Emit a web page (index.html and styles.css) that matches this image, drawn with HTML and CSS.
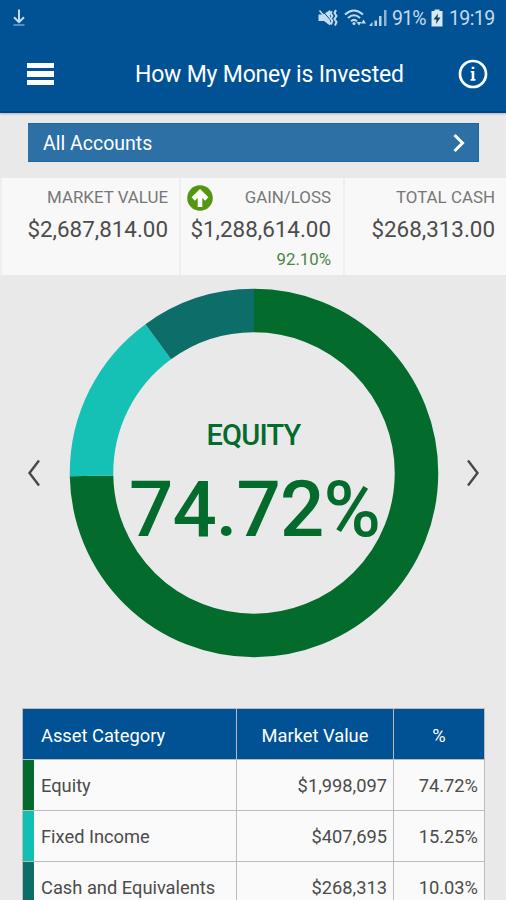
FILE: index.html
```html
<!DOCTYPE html>
<html lang="en">
<head>
  <meta charset="UTF-8" />
  <meta name="viewport" content="width=device-width, initial-scale=1.0" />
  <title>How My Money is Invested</title>
  <link rel="stylesheet" href="styles.css">
</head>
<body>
  <header class="app-header">
    <!-- status bar -->
    <div class="status-bar">
      <svg class="download" width="14" height="18" viewBox="0 0 14 18">
        <path d="M7 0.500V13M2 8.200L7 13.200L12 8.200" fill="none" stroke="#c5dbee" stroke-width="2" />
        <path d="M1.500 16H12.500" stroke="#6f9fc8" stroke-width="1.600" />
      </svg>
      <div class="status-icons">
        <svg class="mute" width="20" height="18" viewBox="0 0 20 18">
          <path d="M0.500 5.500H5L12 1V16.500L6 12H0.500Z" fill="#c5dbee" />
          <path d="M4.500 2L12.500 11" stroke="#005295" stroke-width="1" />
          <path d="M1.500 1.500L13 15" stroke="#c5dbee" stroke-width="1.500" />
          <path d="M13.500 2L12.800 4.500L14.300 7L12.800 9.500L14.300 12L13 15.500M18 1L16.500 4L18.500 7L16.500 10L18.500 13L17 16.500" fill="none" stroke="#c5dbee" stroke-width="2" />
        </svg>
        <svg class="wifi" width="24" height="18" viewBox="0 0 24 18">
          <g fill="none" stroke="#c5dbee" stroke-width="2">
            <path d="M1 5.500Q10 -2.500 19 5.500" />
            <path d="M4 9Q10 3.500 16 9" />
            <path d="M7 12.300Q10 9.500 13 12.300" />
          </g>
          <circle cx="10" cy="14.500" r="1.500" fill="#c5dbee" />
          <path d="M12.500 13H17.500L15 16.500ZM17 14.500H22L19.500 10.500Z" fill="#c5dbee" />
        </svg>
        <svg class="signal" width="18" height="18" viewBox="0 0 18 18">
          <path d="M0.500 17V16L3.500 13V17ZM5.500 11.500H8V17H5.500ZM10 7H12.500V17H10Z" fill="#b3cee6" />
          <path d="M15 1H17.500V17H15Z" fill="#8db4d6" />
        </svg>
        <span class="battery-text">91%</span>
        <svg class="battery" width="12" height="18" viewBox="0 0 12 18">
          <path d="M3.500 0.500H8.500V2H11.500V17.500H0.500V2H3.500Z" fill="#d9e8f5" />
          <path d="M7 4.500L2.500 10.500H5.500L5 15L9.500 8.500H6.500Z" fill="#123c61" />
        </svg>
        <span class="clock">19:19</span>
      </div>
    </div>

    <!-- title bar -->
    <div class="title-bar">
      <div class="menu-icon">
        <span></span>
        <span></span>
        <span></span>
      </div>
      <h1>How My Money is Invested</h1>
      <svg class="info-icon" width="30" height="30" viewBox="0 0 30 30">
        <circle cx="15" cy="15" r="13" fill="none" stroke="#fff" stroke-width="2.700" />
        <path d="M13.700 7.700H16.300V10.100H13.700ZM12.700 12H16.300V20H17.500V21.700H12.500V20H13.700V13.600H12.700Z" fill="#fff" />
      </svg>
    </div>
  </header>

  <div class="account-select">
    <span>All Accounts</span>
    <svg width="14" height="20" viewBox="0 0 14 20">
      <path d="M2.500 2L10.500 10L2.500 18" fill="none" stroke="#fff" stroke-width="3" />
    </svg>
  </div>

  <section class="summary">
    <div class="summary-item">
      <span class="label">MARKET VALUE</span>
      <span class="value">$2,687,814.00</span>
    </div>
    <div class="summary-item gain">
      <div class="label-row">
        <svg width="26" height="26" viewBox="0 0 26 26">
          <circle cx="13" cy="13" r="12.800" fill="#549610" />
          <path d="M13 22V8M6.200 14L13 7.200L19.800 14" fill="none" stroke="#fff" stroke-width="4.600" />
        </svg>
        <span class="label">GAIN/LOSS</span>
      </div>
      <span class="value">$1,288,614.00</span>
      <span class="percent">92.10%</span>
    </div>
    <div class="summary-item">
      <span class="label">TOTAL CASH</span>
      <span class="value">$268,313.00</span>
    </div>
  </section>

  <section class="chart">
    <svg class="arrow" width="14" height="28" viewBox="0 0 14 28">
      <path d="M12 1.500L2.500 14L12 26.500" fill="none" stroke="#484848" stroke-width="2.400" />
    </svg>
    <div class="donut">
      <svg width="370" height="370" viewBox="0 0 370 370">
        <g fill="none" stroke-width="43.500" transform="rotate(-90 185 185)">
          <circle cx="185" cy="185" r="162.500" pathLength="100" stroke="#036b2c" stroke-dasharray="74.720 100" />
          <circle cx="185" cy="185" r="162.500" pathLength="100" stroke="#15c1b5" stroke-dasharray="15.250 100" stroke-dashoffset="-74.720" />
          <circle cx="185" cy="185" r="162.500" pathLength="100" stroke="#0d6d69" stroke-dasharray="10.030 100" stroke-dashoffset="-89.970" />
        </g>
      </svg>
      <div class="donut-text">
        <span class="donut-label">EQUITY</span>
        <span class="donut-value">74.72%</span>
      </div>
    </div>
    <svg class="arrow" width="14" height="28" viewBox="0 0 14 28">
      <path d="M2 1.500L11.500 14L2 26.500" fill="none" stroke="#484848" stroke-width="2.400" />
    </svg>
  </section>

  <table class="assets">
    <thead>
      <tr>
        <th class="category">Asset Category</th>
        <th class="amount">Market Value</th>
        <th class="share">%</th>
      </tr>
    </thead>
    <tbody>
      <tr>
        <td class="equity">Equity</td>
        <td>$1,998,097</td>
        <td>74.72%</td>
      </tr>
      <tr>
        <td class="fixed">Fixed Income</td>
        <td>$407,695</td>
        <td>15.25%</td>
      </tr>
      <tr>
        <td class="cash">Cash and Equivalents</td>
        <td>$268,313</td>
        <td>10.03%</td>
      </tr>
    </tbody>
  </table>
</body>
</html>
```
FILE: styles.css
```css
* {
  box-sizing: border-box;
}

body {
  margin: 0;
  height: 900px;
  overflow: hidden;
  background-color: #e9e9e9;
  font-family: Roboto, "Liberation Sans", sans-serif;
  color: #4c4c4c;
}

/* header */
.app-header {
  height: 113px;
  background-color: #005295;
  border-bottom: 2px solid #00458a;
  box-shadow: 0 1px 2px rgba(0, 0, 0, 0.25);
}

.status-bar {
  display: flex;
  justify-content: space-between;
  align-items: center;
  height: 36px;
  padding: 0 11px 0 12px;
}

.status-bar .download {
  margin-top: -1px;
}

.status-icons {
  display: flex;
  align-items: center;
  color: #c5dbee;
  font-size: 19.5px;
  line-height: 37px;
}

.wifi {
  margin-left: 6px;
}

.signal {
  margin-left: 1px;
}

.battery-text {
  width: 34px;
  margin-left: 5px;
  letter-spacing: -0.8px;
}

.battery {
  margin-left: 5px;
}

.clock {
  width: 46px;
  margin-left: 6px;
  letter-spacing: -0.6px;
}

.title-bar {
  display: flex;
  align-items: center;
  height: 76px;
  padding: 0 18px 0 27px;
}

.menu-icon {
  display: flex;
  flex-direction: column;
  gap: 3px;
  width: 27px;
}

.menu-icon span {
  height: 5.5px;
  background-color: #fff;
}

.title-bar h1 {
  margin: 1px auto 0 81px;
  font-size: 23px;
  font-weight: 400;
  letter-spacing: -0.2px;
  color: #fff;
  white-space: nowrap;
}

/* account selector */
.account-select {
  display: flex;
  justify-content: space-between;
  align-items: center;
  height: 39px;
  margin: 10px 27px 0 28px;
  padding: 0 12px 0 15px;
  background-color: #2c70a6;
  border: 1px solid #1c679f;
  border-left-width: 0;
  color: #fff;
  font-size: 19.5px;
}

.account-select span {
  padding-top: 2px;
}

/* totals */
.summary {
  display: grid;
  grid-template-columns: 177px 162px 1fr;
  gap: 2px;
  height: 97px;
  margin-top: 16px;
  padding-left: 2px;
  background-color: #efefef;
}

.summary-item {
  display: flex;
  flex-direction: column;
  align-items: flex-end;
  padding: 7px 11px 0 0;
  background-color: #f8f8f8;
}

.summary-item.gain {
  padding-right: 12px;
}

.label-row {
  display: flex;
  justify-content: space-between;
  align-self: stretch;
  height: 24px;
  padding-left: 6px;
}

.label {
  height: 24px;
  line-height: 24px;
  font-size: 16.9px;
  color: #777;
}

.value {
  height: 40px;
  line-height: 40px;
  font-size: 22.4px;
}

.percent {
  line-height: 20px;
  font-size: 16.8px;
  color: #4c8545;
}

/* donut chart */
.chart {
  display: flex;
  justify-content: space-between;
  align-items: center;
  height: 370px;
  margin-top: 13px;
  padding: 0 26px 0 27px;
}

.donut {
  position: relative;
  width: 370px;
  height: 370px;
}

.donut-text {
  position: absolute;
  inset: 0;
  display: flex;
  flex-direction: column;
  align-items: center;
  padding-top: 127px;
  color: #036b2c;
  font-weight: 500;
}

.donut-label {
  font-size: 29px;
  line-height: 40px;
  letter-spacing: -0.8px;
}

.donut-value {
  padding-left: 2px;
  font-size: 78px;
  line-height: 109px;
  letter-spacing: -0.9px;
}

/* asset table */
.assets {
  width: 463px;
  margin: 50px 0 0 22px;
  border-collapse: collapse;
  table-layout: fixed;
  background-color: #fafafa;
  font-size: 18.3px;
}

.assets th,
.assets td {
  height: 51px;
  padding: 2px 6px 0;
  border: 1px solid #bcbcbc;
  text-align: right;
  white-space: nowrap;
}

.assets th {
  height: 51px;
  padding-top: 3px;
  background-color: #005295;
  color: #fff;
  font-weight: 400;
  text-align: center;
}

.assets td {
  padding-top: 1px;
}

.assets .category {
  width: 214px;
  padding-left: 18px;
  text-align: left;
}

.assets .amount {
  width: 157px;
}

.assets td:first-child {
  padding-left: 18px;
  text-align: left;
  background-repeat: no-repeat;
  background-size: 11px 100%;
}

.equity {
  background-image: linear-gradient(#036b2c, #036b2c);
}

.fixed {
  background-image: linear-gradient(#10c1b3, #10c1b3);
}

.cash {
  background-image: linear-gradient(#0d6d69, #0d6d69);
}
```
